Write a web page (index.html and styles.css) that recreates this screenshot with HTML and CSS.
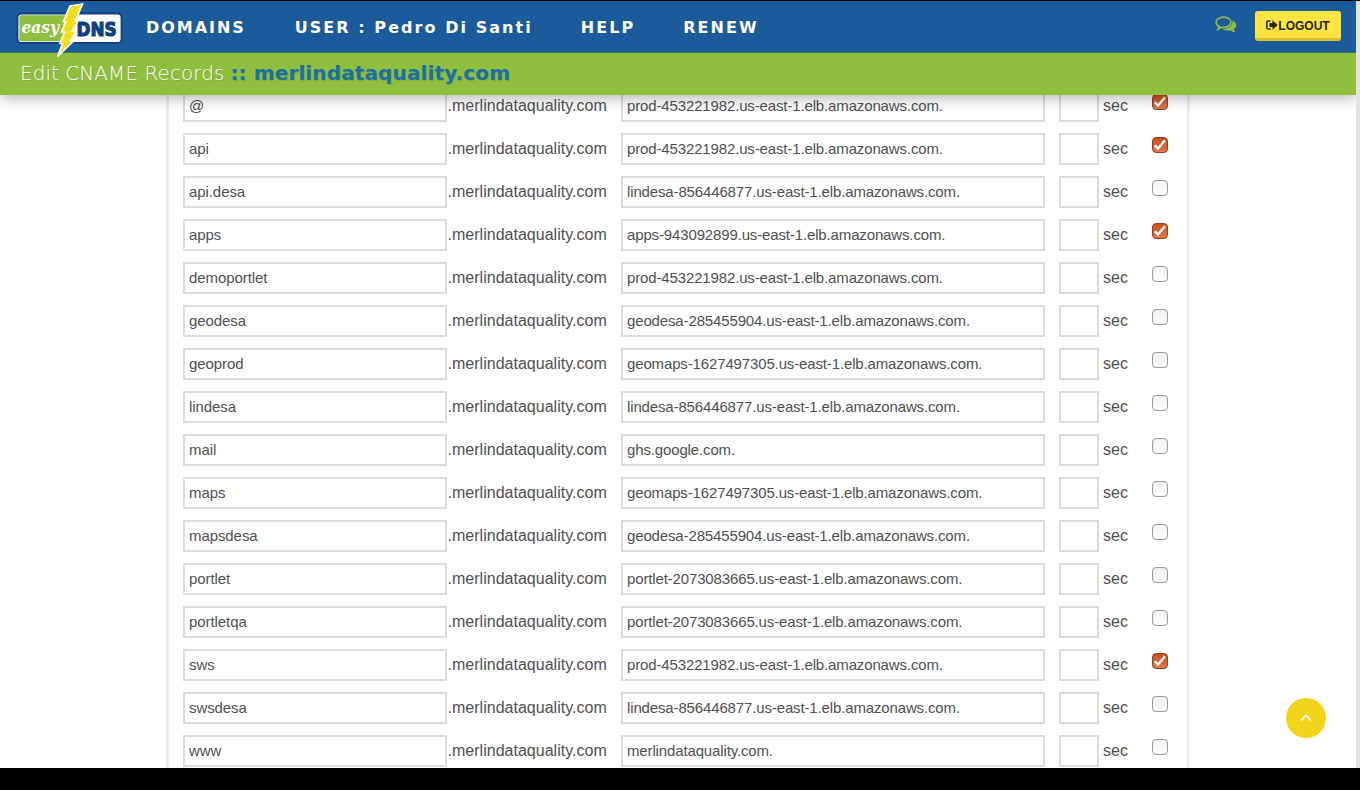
FILE: index.html
```html
<!DOCTYPE html>
<html lang="en">
<head>
<meta charset="utf-8">
<title>Edit CNAME Records</title>
<link rel="stylesheet" href="styles.css">
</head>
<body>
<div class="window">
  <div class="page">
    <header class="header">
      <nav class="navbar">
        <svg class="logo" width="112" height="58" viewBox="0 0 112 58">
          <rect x="3.500" y="13.500" width="104" height="29.500" rx="4" fill="#fff" stroke="#0d4183" stroke-width="1.800"/>
          <path d="M7 15.300H58L52 41.300H7Q5.300 41.300 5.300 39.300V17.300Q5.300 15.300 7 15.300Z" fill="#8fbf3f"/>
          <text class="logo-easy" x="7.500" y="32.500" textLength="37.500" lengthAdjust="spacingAndGlyphs">easy</text>
          <text class="logo-dns" x="62.500" y="35.500" textLength="40" lengthAdjust="spacingAndGlyphs">DNS</text>
          <path d="M56 6L68.500 4L61.500 20.500L64.500 20L58.500 31L62 31L56.500 41.500L59 41.500L43.500 56.500L48.500 43.500H46L50.500 32H47.500L51.500 21.500H49.500Z" fill="#f4dc20" stroke="#fff" stroke-width="1.700"/>
        </svg>
        <span class="nav-item nav-domains">DOMAINS</span>
        <span class="nav-item nav-user">USER : Pedro Di Santi</span>
        <span class="nav-item nav-help">HELP</span>
        <span class="nav-item">RENEW</span>
        <svg class="chat" width="22" height="18" viewBox="0 0 22 18">
          <path d="M8.500 1.100C4.500 1.100 1.100 3.300 1.100 6.200C1.100 8 2.300 9.500 4.200 10.500L3 13.200L6.600 11.200C12 11.900 16 9.500 16 6.200C16 3.300 12.500 1.100 8.500 1.100Z" fill="none" stroke="#8fc045" stroke-width="1.600"/>
          <path d="M17.400 4.400C22 6.500 22.500 11 18.800 13.200C19 14.500 19.800 15.300 21 16.300C18.500 16.500 16.800 15.500 15.700 14.300C12.500 14.800 9.500 14.300 7.500 12.900C13 12.800 18.500 9.500 17.400 4.400Z" fill="#8fc045"/>
        </svg>
        <span class="logout">
          <svg width="12" height="10" viewBox="0 0 12 10"><path d="M4.500 .9H2.500Q.8 .9 .8 2.600V7.400Q.8 9.100 2.500 9.100H4.500" fill="none" stroke="#262616" stroke-width="1.500"/><path d="M3.500 3H6.500V.3L11.700 5L6.500 9.700V7H3.500Z" fill="#262616"/></svg><span class="logout-label">LOGOUT</span>
        </span>
      </nav>
      <div class="titlebar"><span class="title">Edit CNAME Records</span><span class="domain">:: merlindataquality.com</span></div>
    </header>
    <main class="content">
      <div class="panel">
        <div class="row"><div class="field">@</div><div class="suffix">.merlindataquality.com</div><div class="field">prod-453221982.us-east-1.elb.amazonaws.com.</div><div class="field ttl"></div><div class="sec">sec</div><div class="check on"><svg width="16" height="16" viewBox="0 0 16 16"><path d="M2.800 8.300L6 11.600L13 3.300"/></svg></div></div>
        <div class="row"><div class="field">api</div><div class="suffix">.merlindataquality.com</div><div class="field">prod-453221982.us-east-1.elb.amazonaws.com.</div><div class="field ttl"></div><div class="sec">sec</div><div class="check on"><svg width="16" height="16" viewBox="0 0 16 16"><path d="M2.800 8.300L6 11.600L13 3.300"/></svg></div></div>
        <div class="row"><div class="field">api.desa</div><div class="suffix">.merlindataquality.com</div><div class="field">lindesa-856446877.us-east-1.elb.amazonaws.com.</div><div class="field ttl"></div><div class="sec">sec</div><div class="check"></div></div>
        <div class="row"><div class="field">apps</div><div class="suffix">.merlindataquality.com</div><div class="field">apps-943092899.us-east-1.elb.amazonaws.com.</div><div class="field ttl"></div><div class="sec">sec</div><div class="check on"><svg width="16" height="16" viewBox="0 0 16 16"><path d="M2.800 8.300L6 11.600L13 3.300"/></svg></div></div>
        <div class="row"><div class="field">demoportlet</div><div class="suffix">.merlindataquality.com</div><div class="field">prod-453221982.us-east-1.elb.amazonaws.com.</div><div class="field ttl"></div><div class="sec">sec</div><div class="check"></div></div>
        <div class="row"><div class="field">geodesa</div><div class="suffix">.merlindataquality.com</div><div class="field">geodesa-285455904.us-east-1.elb.amazonaws.com.</div><div class="field ttl"></div><div class="sec">sec</div><div class="check"></div></div>
        <div class="row"><div class="field">geoprod</div><div class="suffix">.merlindataquality.com</div><div class="field">geomaps-1627497305.us-east-1.elb.amazonaws.com.</div><div class="field ttl"></div><div class="sec">sec</div><div class="check"></div></div>
        <div class="row"><div class="field">lindesa</div><div class="suffix">.merlindataquality.com</div><div class="field">lindesa-856446877.us-east-1.elb.amazonaws.com.</div><div class="field ttl"></div><div class="sec">sec</div><div class="check"></div></div>
        <div class="row"><div class="field">mail</div><div class="suffix">.merlindataquality.com</div><div class="field">ghs.google.com.</div><div class="field ttl"></div><div class="sec">sec</div><div class="check"></div></div>
        <div class="row"><div class="field">maps</div><div class="suffix">.merlindataquality.com</div><div class="field">geomaps-1627497305.us-east-1.elb.amazonaws.com.</div><div class="field ttl"></div><div class="sec">sec</div><div class="check"></div></div>
        <div class="row"><div class="field">mapsdesa</div><div class="suffix">.merlindataquality.com</div><div class="field">geodesa-285455904.us-east-1.elb.amazonaws.com.</div><div class="field ttl"></div><div class="sec">sec</div><div class="check"></div></div>
        <div class="row"><div class="field">portlet</div><div class="suffix">.merlindataquality.com</div><div class="field">portlet-2073083665.us-east-1.elb.amazonaws.com.</div><div class="field ttl"></div><div class="sec">sec</div><div class="check"></div></div>
        <div class="row"><div class="field">portletqa</div><div class="suffix">.merlindataquality.com</div><div class="field">portlet-2073083665.us-east-1.elb.amazonaws.com.</div><div class="field ttl"></div><div class="sec">sec</div><div class="check"></div></div>
        <div class="row"><div class="field">sws</div><div class="suffix">.merlindataquality.com</div><div class="field">prod-453221982.us-east-1.elb.amazonaws.com.</div><div class="field ttl"></div><div class="sec">sec</div><div class="check on"><svg width="16" height="16" viewBox="0 0 16 16"><path d="M2.800 8.300L6 11.600L13 3.300"/></svg></div></div>
        <div class="row"><div class="field">swsdesa</div><div class="suffix">.merlindataquality.com</div><div class="field">lindesa-856446877.us-east-1.elb.amazonaws.com.</div><div class="field ttl"></div><div class="sec">sec</div><div class="check"></div></div>
        <div class="row"><div class="field">www</div><div class="suffix">.merlindataquality.com</div><div class="field">merlindataquality.com.</div><div class="field ttl"></div><div class="sec">sec</div><div class="check"></div></div>
      </div>
    </main>
    <div class="to-top"><svg width="12" height="8" viewBox="0 0 12 8"><path d="M1 6.500L6 1.500L11 6.500" fill="none" stroke="#fff" stroke-width="1.600"/></svg></div>
  </div>
</div>
</body>
</html>
```
FILE: styles.css
```css
* { box-sizing: border-box; }
body {
  margin: 0;
  background: #000;
  font-family: "Liberation Sans", Arial, sans-serif;
  color: #505050;
}
.window {
  height: 768px;
  padding: 1px 4px 0 0;
  background: linear-gradient(#000 1px, #e3e3e3 1px);
  overflow: hidden;
}
.page {
  position: relative;
  height: 767px;
  display: flex;
  flex-direction: column;
  background: #fff;
  overflow: hidden;
}
.header {
  position: relative;
  z-index: 2;
  flex: none;
  box-shadow: 0 3px 14px rgba(0, 0, 0, .3);
}
.navbar {
  height: 51px;
  display: flex;
  align-items: center;
  padding: 1px 15px 0 14px;
  background: #1b5b9b;
  font-family: "DejaVu Sans", sans-serif;
}
.logo {
  flex: none;
  align-self: flex-start;
  position: relative;
  z-index: 1;
  margin: -2px 20px 0 0;
}
.logo-easy {
  font: italic bold 16.5px "DejaVu Serif", serif;
  fill: #fff;
}
.logo-dns {
  font: bold 19.5px "DejaVu Sans", sans-serif;
  fill: #0d4183;
  stroke: #0d4183;
  stroke-width: 1.2px;
}
.nav-item {
  font-size: 16px;
  font-weight: 700;
  letter-spacing: 2.05px;
  color: #fff;
  white-space: nowrap;
}
.nav-domains {
  margin-right: 49px;
  letter-spacing: 1.95px;
}
.nav-user { margin-right: 48px; }
.nav-help { margin-right: 48px; }
.chat { margin: -5px 18px 0 auto; }
.logout {
  width: 86px;
  height: 30px;
  margin-top: -2px;
  display: flex;
  align-items: center;
  justify-content: center;
  background: #ffe340;
  border-bottom: 3px solid #dcc32c;
  border-radius: 3px;
  font: bold 12px "Liberation Sans", sans-serif;
  color: #262616;
}
.logout-label { padding-top: 2px; }
.logout svg { margin-top: 1px; }
.titlebar {
  height: 43px;
  display: flex;
  align-items: center;
  padding: 0 0 3px 20px;
  border-top: 1px solid #3e7369;
  background: #90bf40;
  font-family: "DejaVu Sans", sans-serif;
  font-size: 20px;
  text-shadow: 1px 1px 1px rgba(0, 0, 0, .12);
  white-space: nowrap;
}
.title {
  font-weight: 200;
  letter-spacing: .05px;
  color: #fff;
  margin-right: 6px;
}
.domain {
  font-weight: 700;
  letter-spacing: .13px;
  color: #1b6fa3;
}
.content { overflow: hidden; flex: 1; }
.panel {
  width: 1024px;
  margin: -5px 0 0 166px;
  padding-left: 14px;
  border: 3px solid #ededed;
  border-width: 0 3px;
}
.row {
  display: grid;
  grid-template-columns: 264px 174px 424px 54px 53px 16px;
  height: 43px;
}
.field {
  height: 32px;
  padding-left: 4px;
  border: 2px solid #dcdcdc;
  font-size: 15px;
  letter-spacing: -.14px;
  line-height: 28px;
  white-space: nowrap;
}
.field:first-child { letter-spacing: -.08px; }
.suffix, .sec {
  font-size: 16px;
  line-height: 31px;
  white-space: nowrap;
}
.suffix {
  padding-left: .5px;
  letter-spacing: .02px;
}
.ttl { margin-left: 14px; width: 40px; }
.sec { padding-left: 4px; }
.check {
  width: 16px;
  height: 16px;
  margin-top: 4px;
  border: 1px solid #9c9c9c;
  border-radius: 4px;
  background: linear-gradient(#f2f2f2, #fff);
  box-shadow: inset 0 0 1px #bbb;
}
.check.on {
  border-color: #8f4122;
  background: linear-gradient(#c8501f, #e17a4c);
  box-shadow: none;
}
.check svg { display: block; margin: -1px; }
.check path {
  fill: none;
  stroke: #fff;
  stroke-width: 2.3;
}
.to-top {
  position: absolute;
  right: 30px;
  bottom: 30px;
  width: 40px;
  height: 40px;
  display: flex;
  align-items: center;
  justify-content: center;
  border-radius: 50%;
  background: #f0d51c;
}
```
